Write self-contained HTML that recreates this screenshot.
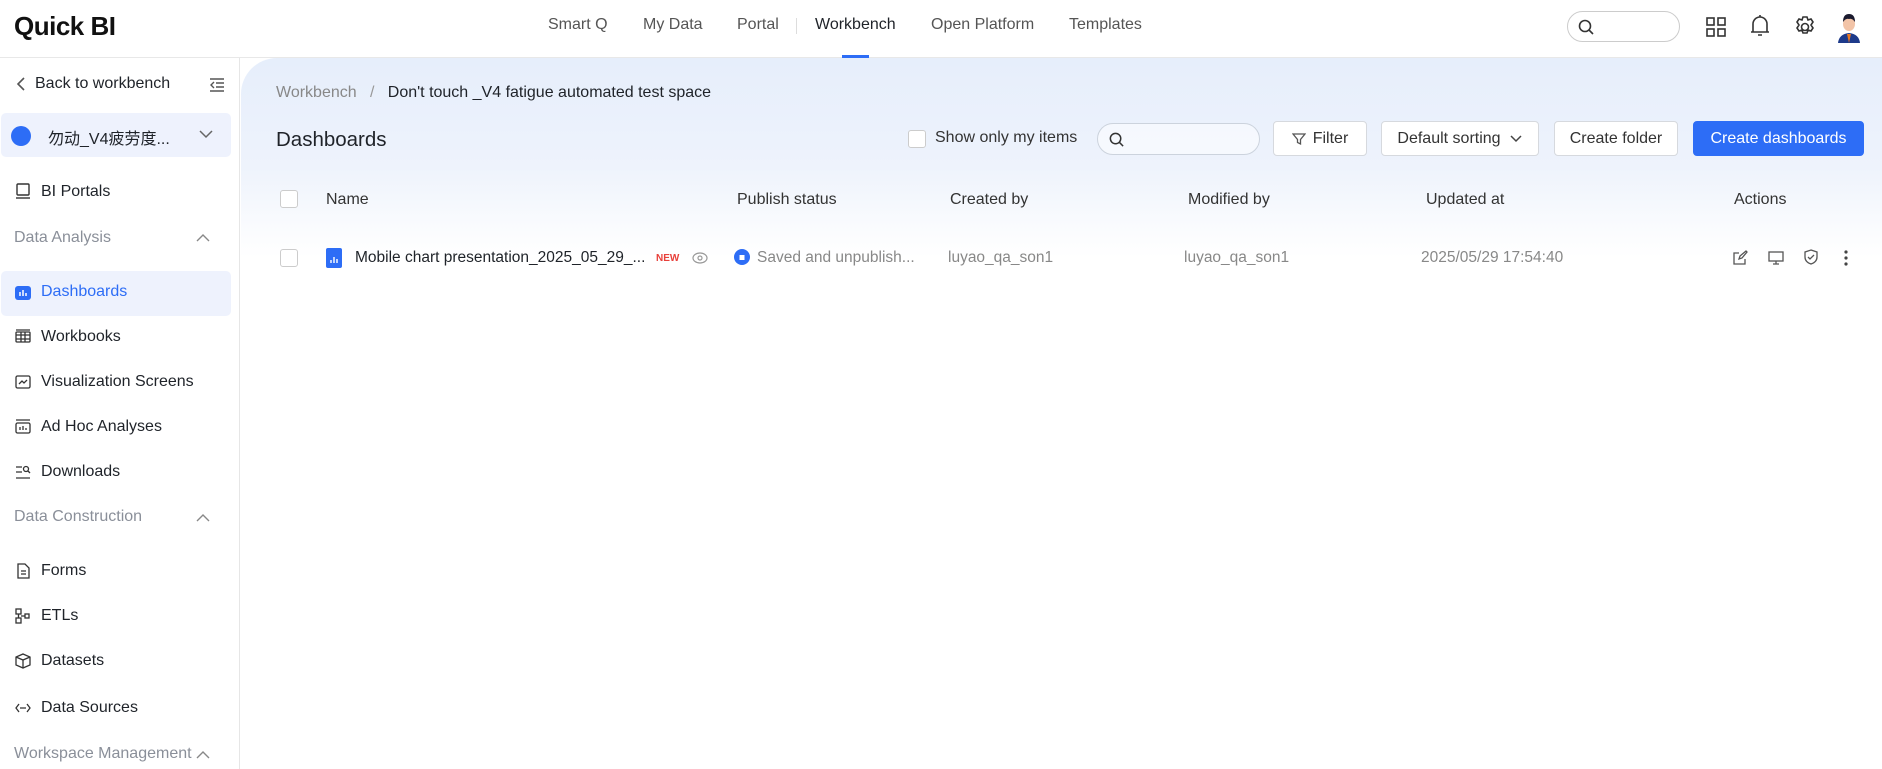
<!DOCTYPE html>
<html><head><meta charset="utf-8"><style>
*{box-sizing:border-box;margin:0;padding:0}
body{width:1882px;height:769px;overflow:hidden;background:#fff;font-family:"Liberation Sans","Noto Sans CJK SC",sans-serif;color:#1f2329;position:relative}
.a{position:absolute;white-space:nowrap}
.top{position:absolute;left:0;top:0;width:1882px;height:58px;background:#fff;border-bottom:1px solid #e8e8e8}
.nav{font-size:16px;color:#555;top:16px}
.side{position:absolute;left:0;top:58px;width:240px;height:711px;border-right:1px solid #e6e6e6;background:#fff}
.mi{font-size:16px;color:#1f2329}
.grp{font-size:16px;color:#8a8f99}
.ic{position:absolute;left:14px;width:18px;height:18px}
.main{position:absolute;left:241px;top:58px;width:1641px;height:711px;border-top-left-radius:36px;background:linear-gradient(180deg,#e6eefb 0px,#eef3fc 110px,#fbfcfe 175px,#fff 200px);overflow:hidden}
.btn{position:absolute;top:121px;height:35px;border:1px solid #d6d9de;border-radius:4px;background:#fff;font-size:16px;color:#333;display:flex;align-items:center;justify-content:center}
.th{font-size:16px;color:#333;top:191px}
.td{font-size:15.5px;color:#888;top:249px}
.cb{position:absolute;width:18px;height:18px;border:1px solid #ccc;border-radius:3px;background:#fff}
</style></head><body>
<div class="top"></div>
<div class="a" style="left:14px;top:11px;font-size:26px;font-weight:bold;letter-spacing:-0.5px;color:#111">Quick BI</div>
<div class="a nav" style="left:548px">Smart Q</div>
<div class="a nav" style="left:643px">My Data</div>
<div class="a nav" style="left:737px">Portal</div>
<div class="a" style="left:796px;top:18px;width:1px;height:16px;background:#ddd"></div>
<div class="a nav" style="left:815px;color:#1f2329">Workbench</div>
<div class="a" style="left:842px;top:55px;width:27px;height:3px;background:#2d6df6"></div>
<div class="a nav" style="left:931px">Open Platform</div>
<div class="a nav" style="left:1069px">Templates</div>
<div class="a" style="left:1567px;top:11px;width:113px;height:31px;border:1px solid #ccc;border-radius:16px"></div>
<svg class="a" style="left:1577px;top:18px" width="18" height="18" viewBox="0 0 18 18" fill="none" stroke="#333" stroke-width="1.6"><circle cx="8" cy="8" r="5.5"/><path d="M12 12l4 4"/></svg>
<svg class="a" style="left:1705px;top:16px" width="22" height="22" viewBox="0 0 22 22" fill="none" stroke="#333" stroke-width="1.6"><rect x="2" y="2" width="7" height="7"/><rect x="13" y="2" width="7" height="7"/><rect x="2" y="13" width="7" height="7"/><rect x="13" y="13" width="7" height="7"/></svg>
<svg class="a" style="left:1749px;top:14px" width="22" height="24" viewBox="0 0 22 24" fill="none" stroke="#333" stroke-width="1.6"><path d="M4 18V10a7 7 0 0114 0v8zM2 18h18M9 21h4M11 1v2"/></svg>
<svg class="a" style="left:1793px;top:15px" width="24" height="24" viewBox="0 0 24 24" fill="none" stroke="#333" stroke-width="1.6"><circle cx="12" cy="12" r="3.5"/><path d="M10 2h4l1 3 3-1 2 3-2 3 2 3-2 3-3-1-1 3h-4l-1-3-3 1-2-3 2-3-2-3 2-3 3 1z"/></svg>
<svg class="a" style="left:1836px;top:13px" width="26" height="30" viewBox="0 0 26 30"><path d="M2 30q1-9 11-10 10 1 11 10z" fill="#1d3a8a"/><path d="M11 21l2 9 2-9z" fill="#e87722"/><ellipse cx="13" cy="11" rx="6" ry="7" fill="#f2c4a8"/><path d="M7 9q0-8 6-8t6 8q-3-4-6-3-3-1-6 3z" fill="#1a1a2e"/></svg>

<div class="side"></div>
<svg class="a" style="left:16px;top:76px" width="10" height="16" viewBox="0 0 10 16" fill="none" stroke="#555" stroke-width="1.6"><path d="M8 2L2 8l6 6"/></svg>
<div class="a mi" style="left:35px;top:75px">Back to workbench</div>
<svg class="a" style="left:208px;top:76px" width="18" height="18" viewBox="0 0 18 18" fill="none" stroke="#555" stroke-width="1.4"><path d="M2 3h14M8 7h8M8 11h8M2 15h14M6 6L3 9l3 3"/></svg>
<div class="a" style="left:1px;top:113px;width:230px;height:44px;background:#eef2fd;border-radius:5px"></div>
<div class="a" style="left:11px;top:126px;width:20px;height:20px;border-radius:50%;background:#2d6df6"></div>
<div class="a" style="left:48px;top:125px;font-size:16px;color:#1f2329">勿动_V4疲劳度...</div>
<svg class="a" style="left:198px;top:128px" width="16" height="12" viewBox="0 0 16 12" fill="none" stroke="#666" stroke-width="1.5"><path d="M2 3l6 6 6-6"/></svg>
<svg class="ic" style="top:182px" viewBox="0 0 18 18" fill="none" stroke="#333" stroke-width="1.4"><rect x="3" y="2" width="12" height="11" rx="1"/><path d="M2 16h14"/></svg>
<div class="a mi" style="left:41px;top:183px">BI Portals</div>
<div class="a grp" style="left:14px;top:229px">Data Analysis</div>
<svg class="a" style="left:196px;top:233px" width="14" height="10" viewBox="0 0 14 10" fill="none" stroke="#888" stroke-width="1.4"><path d="M1 8l6-6 6 6"/></svg>
<div class="a" style="left:1px;top:271px;width:230px;height:45px;background:#eef2fd;border-radius:5px"></div>
<svg class="ic" style="top:284px" viewBox="0 0 18 18"><rect x="1" y="2" width="16" height="14" rx="3" fill="#2d6df6"/><path d="M6 12V8M9 12V6M12 12V9" stroke="#fff" stroke-width="1.5"/></svg>
<div class="a mi" style="left:41px;top:283px;color:#2d6df6">Dashboards</div>
<svg class="ic" style="top:328px" viewBox="0 0 18 18" fill="none" stroke="#333" stroke-width="1.3"><rect x="2" y="4" width="14" height="10" rx="1"/><path d="M2 7h14M2 11h14M7 4v10M11 4v10M2 2h14"/></svg>
<div class="a mi" style="left:41px;top:328px">Workbooks</div>
<svg class="ic" style="top:373px" viewBox="0 0 18 18" fill="none" stroke="#333" stroke-width="1.3"><rect x="2" y="3" width="14" height="12" rx="1.5"/><path d="M5 11l3-3 2 2 3-3"/></svg>
<div class="a mi" style="left:41px;top:373px">Visualization Screens</div>
<svg class="ic" style="top:418px" viewBox="0 0 18 18" fill="none" stroke="#333" stroke-width="1.3"><rect x="2" y="5" width="14" height="10" rx="1.5"/><path d="M2 2h14M6 12V9M9 12V8M12 12V10"/></svg>
<div class="a mi" style="left:41px;top:418px">Ad Hoc Analyses</div>
<svg class="ic" style="top:463px" viewBox="0 0 18 18" fill="none" stroke="#333" stroke-width="1.3"><path d="M2 4h6M2 9h6M2 15h14"/><circle cx="12" cy="6" r="2.5"/><path d="M14 8l2 2"/></svg>
<div class="a mi" style="left:41px;top:463px">Downloads</div>
<div class="a grp" style="left:14px;top:508px">Data Construction</div>
<svg class="a" style="left:196px;top:513px" width="14" height="10" viewBox="0 0 14 10" fill="none" stroke="#888" stroke-width="1.4"><path d="M1 8l6-6 6 6"/></svg>
<svg class="ic" style="top:562px" viewBox="0 0 18 18" fill="none" stroke="#333" stroke-width="1.3"><path d="M4 2h7l4 4v10H4zM7 9h5M7 12h5"/></svg>
<div class="a mi" style="left:41px;top:562px">Forms</div>
<svg class="ic" style="top:607px" viewBox="0 0 18 18" fill="none" stroke="#333" stroke-width="1.3"><rect x="2" y="2" width="5" height="5"/><rect x="2" y="11" width="5" height="5"/><rect x="11" y="7" width="4" height="4"/><path d="M4.5 7v4M7 9h4"/></svg>
<div class="a mi" style="left:41px;top:607px">ETLs</div>
<svg class="ic" style="top:652px" viewBox="0 0 18 18" fill="none" stroke="#333" stroke-width="1.3"><path d="M9 2l7 3v8l-7 3-7-3V5zM2 5l7 3 7-3M9 8v8"/></svg>
<div class="a mi" style="left:41px;top:652px">Datasets</div>
<svg class="ic" style="top:699px" viewBox="0 0 18 18" fill="none" stroke="#333" stroke-width="1.3"><path d="M5 5L2 9l3 4M13 5l3 4-3 4M6 9h6"/></svg>
<div class="a mi" style="left:41px;top:699px">Data Sources</div>
<div class="a grp" style="left:14px;top:745px">Workspace Management</div>
<svg class="a" style="left:196px;top:750px" width="14" height="10" viewBox="0 0 14 10" fill="none" stroke="#888" stroke-width="1.4"><path d="M1 8l6-6 6 6"/></svg>

<div class="main"></div>
<div class="a" style="left:276px;top:84px;font-size:16px;color:#888">Workbench&nbsp;&nbsp;&nbsp;<span style="color:#999">/</span>&nbsp;&nbsp;&nbsp;<span style="color:#1f2329">Don't touch _V4 fatigue automated test space</span></div>
<div class="a" style="left:276px;top:128px;font-size:20.5px;color:#1f2329">Dashboards</div>
<div class="cb" style="left:908px;top:130px"></div>
<div class="a" style="left:935px;top:129px;font-size:16px;color:#333">Show only my items</div>
<div class="a" style="left:1097px;top:123px;width:163px;height:32px;border:1px solid #ccd3dd;border-radius:16px;background:rgba(255,255,255,.5)"></div>
<svg class="a" style="left:1108px;top:131px" width="17" height="17" viewBox="0 0 18 18" fill="none" stroke="#333" stroke-width="1.6"><circle cx="8" cy="8" r="5.5"/><path d="M12 12l4 4"/></svg>
<div class="btn" style="left:1273px;width:94px"><svg width="14" height="14" viewBox="0 0 14 14" fill="none" stroke="#555" stroke-width="1.3" style="margin-right:7px"><path d="M1 2h12L8.5 7.5V12l-3-1.5v-3z"/></svg>Filter</div>
<div class="btn" style="left:1381px;width:158px">Default sorting<svg width="14" height="10" viewBox="0 0 14 10" fill="none" stroke="#444" stroke-width="1.5" style="margin-left:8px"><path d="M2 2l5 5 5-5"/></svg></div>
<div class="btn" style="left:1554px;width:124px">Create folder</div>
<div class="btn" style="left:1693px;width:171px;background:#2d6df6;border-color:#2d6df6;color:#fff">Create dashboards</div>

<div class="cb" style="left:280px;top:190px"></div>
<div class="a th" style="left:326px">Name</div>
<div class="a th" style="left:737px">Publish status</div>
<div class="a th" style="left:950px">Created by</div>
<div class="a th" style="left:1188px">Modified by</div>
<div class="a th" style="left:1426px">Updated at</div>
<div class="a th" style="left:1734px">Actions</div>

<div class="cb" style="left:280px;top:249px"></div>
<svg class="a" style="left:326px;top:248px" width="16" height="20" viewBox="0 0 16 20"><rect width="16" height="20" rx="2" fill="#2d6df6"/><path d="M5 15v-3M8 15V9M11 15v-4" stroke="#fff" stroke-width="1.4"/></svg>
<div class="a" style="left:355px;top:249px;font-size:15.5px;color:#1f2329">Mobile chart presentation_2025_05_29_...</div>
<div class="a" style="left:656px;top:253px;font-size:10px;font-weight:bold;color:#e8403b">NEW</div>
<svg class="a" style="left:692px;top:251px" width="16" height="14" viewBox="0 0 16 14" fill="none" stroke="#999" stroke-width="1.2"><ellipse cx="8" cy="7" rx="7" ry="5"/><circle cx="8" cy="7" r="2"/></svg>
<svg class="a" style="left:734px;top:249px" width="16" height="16" viewBox="0 0 16 16"><circle cx="8" cy="8" r="8" fill="#2d6df6"/><rect x="5.5" y="6" width="5" height="5" fill="#fff"/></svg>
<div class="a td" style="left:757px">Saved and unpublish...</div>
<div class="a td" style="left:948px">luyao_qa_son1</div>
<div class="a td" style="left:1184px">luyao_qa_son1</div>
<div class="a td" style="left:1421px">2025/05/29 17:54:40</div>
<svg class="a" style="left:1732px;top:250px" width="16" height="16" viewBox="0 0 16 16" fill="none" stroke="#555" stroke-width="1.3"><path d="M13 9v5H2V3h5M7 9l1-3 6-5 1 1-5 6z"/></svg>
<svg class="a" style="left:1768px;top:251px" width="16" height="14" viewBox="0 0 16 14" fill="none" stroke="#555" stroke-width="1.3"><rect x="1" y="1" width="14" height="9"/><path d="M8 10v3M5 13h6"/></svg>
<svg class="a" style="left:1804px;top:249px" width="14" height="16" viewBox="0 0 14 16" fill="none" stroke="#555" stroke-width="1.3"><path d="M7 1l6 2v5q0 5-6 7-6-2-6-7V3zM4 8l2 2 4-4"/></svg>
<svg class="a" style="left:1843px;top:249px" width="6" height="18" viewBox="0 0 6 18" fill="#444"><circle cx="3" cy="3" r="1.6"/><circle cx="3" cy="9" r="1.6"/><circle cx="3" cy="15" r="1.6"/></svg>
</body></html>
